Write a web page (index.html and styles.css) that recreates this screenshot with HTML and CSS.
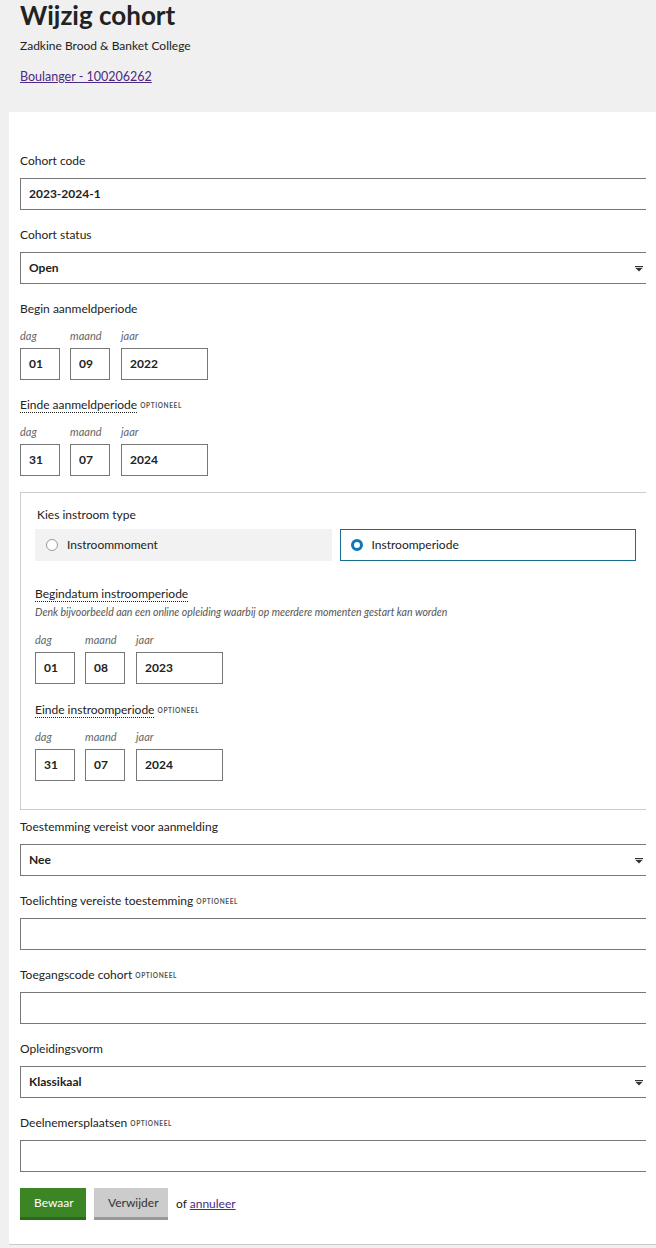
FILE: index.html
```html
<!DOCTYPE html>
<html lang="nl">
<head>
<meta charset="utf-8">
<title>Wijzig cohort</title>
<link rel="stylesheet" href="styles.css">
</head>
<body>
<header class="page-header">
  <h1 class="title">Wijzig cohort</h1>
  <p class="subtitle">Zadkine Brood &amp; Banket College</p>
  <a class="crumb" href="#">Boulanger - 100206262</a>
</header>
<main class="card">
  <form class="form">
    <div class="field">
      <label class="label">Cohort code</label>
      <div class="input"><span class="value">2023-2024-1</span></div>
    </div>
    <div class="field">
      <label class="label">Cohort status</label>
      <div class="input select"><span class="value">Open</span><svg class="caret" width="8" height="6" viewBox="0 0 8 6"><rect x="0" y="0" width="8" height="1.2" fill="#333"/><path d="M0.5 2 L7.5 2 L4 5.5 Z" fill="#333"/></svg></div>
    </div>
    <div class="field">
      <label class="label">Begin aanmeldperiode</label>
      <div class="date">
        <div class="date-part"><span class="sub">dag</span><div class="input small"><span class="value">01</span></div></div>
        <div class="date-part"><span class="sub">maand</span><div class="input small"><span class="value">09</span></div></div>
        <div class="date-part year"><span class="sub">jaar</span><div class="input year-box"><span class="value">2022</span></div></div>
      </div>
    </div>
    <div class="field">
      <label class="label"><span class="dotted">Einde aanmeldperiode</span> <span class="opt">OPTIONEEL</span></label>
      <div class="date">
        <div class="date-part"><span class="sub">dag</span><div class="input small"><span class="value">31</span></div></div>
        <div class="date-part"><span class="sub">maand</span><div class="input small"><span class="value">07</span></div></div>
        <div class="date-part year"><span class="sub">jaar</span><div class="input year-box"><span class="value">2024</span></div></div>
      </div>
    </div>

    <fieldset class="box">
      <div class="box-label">Kies instroom type</div>
      <div class="radios">
        <div class="radio"><span class="dot"></span><span>Instroommoment</span></div>
        <div class="radio checked"><span class="dot"></span><span>Instroomperiode</span></div>
      </div>
      <div class="field inbox first">
        <label class="label"><span class="dotted">Begindatum instroomperiode</span></label>
        <div class="hint">Denk bijvoorbeeld aan een online opleiding waarbij op meerdere momenten gestart kan worden</div>
        <div class="date">
          <div class="date-part"><span class="sub">dag</span><div class="input small"><span class="value">01</span></div></div>
          <div class="date-part"><span class="sub">maand</span><div class="input small"><span class="value">08</span></div></div>
          <div class="date-part year"><span class="sub">jaar</span><div class="input year-box"><span class="value">2023</span></div></div>
        </div>
      </div>
      <div class="field inbox">
        <label class="label"><span class="dotted">Einde instroomperiode</span> <span class="opt">OPTIONEEL</span></label>
        <div class="date">
          <div class="date-part"><span class="sub">dag</span><div class="input small"><span class="value">31</span></div></div>
          <div class="date-part"><span class="sub">maand</span><div class="input small"><span class="value">07</span></div></div>
          <div class="date-part year"><span class="sub">jaar</span><div class="input year-box"><span class="value">2024</span></div></div>
        </div>
      </div>
    </fieldset>

    <div class="field">
      <label class="label">Toestemming vereist voor aanmelding</label>
      <div class="input select"><span class="value">Nee</span><svg class="caret" width="8" height="6" viewBox="0 0 8 6"><rect x="0" y="0" width="8" height="1.2" fill="#333"/><path d="M0.5 2 L7.5 2 L4 5.5 Z" fill="#333"/></svg></div>
    </div>
    <div class="field">
      <label class="label">Toelichting vereiste toestemming <span class="opt">OPTIONEEL</span></label>
      <div class="input"></div>
    </div>
    <div class="field">
      <label class="label">Toegangscode cohort <span class="opt">OPTIONEEL</span></label>
      <div class="input"></div>
    </div>
    <div class="field">
      <label class="label">Opleidingsvorm</label>
      <div class="input select"><span class="value">Klassikaal</span><svg class="caret" width="8" height="6" viewBox="0 0 8 6"><rect x="0" y="0" width="8" height="1.2" fill="#333"/><path d="M0.5 2 L7.5 2 L4 5.5 Z" fill="#333"/></svg></div>
    </div>
    <div class="field">
      <label class="label">Deelnemersplaatsen <span class="opt">OPTIONEEL</span></label>
      <div class="input"></div>
    </div>
    <div class="actions">
      <button type="button" class="btn primary">Bewaar</button>
      <button type="button" class="btn secondary">Verwijder</button>
      <span class="or">of <a href="#">annuleer</a></span>
    </div>
  </form>
</main>
</body>
</html>
```

FILE: styles.css
```css
* { box-sizing: border-box; }
html, body {
  margin: 0;
  padding: 0;
  background: #f0f0f0;
  font-family: Lato, "Liberation Sans", sans-serif;
  color: #222;
  font-size: 12px;
  line-height: 18px;
}
.page-header {
  padding: 0 20px 26px 20px;
}
.title {
  margin: 0;
  font-size: 26px;
  line-height: 30px;
  font-weight: 700;
  color: #222;
}
.subtitle {
  margin: 7px 0 0 0;
  font-size: 12px;
  line-height: 18px;
}
.crumb {
  display: inline-block;
  margin-top: 13px;
  color: #4b2a84;
  text-decoration: underline;
  font-size: 12.5px;
  line-height: 18px;
}
.card {
  margin-left: 9px;
  background: #fff;
  border-bottom: 1px solid #ccc;
  padding: 40px 0 23px 11px;
  height: 1133px;
}
.form {
  width: 626px;
  overflow: hidden;
}
.field {
  margin-bottom: 16px;
}
.label {
  display: block;
  font-size: 12px;
  line-height: 18px;
  margin-bottom: 0;
  color: #222;
}
.dotted {
  border-bottom: 1px dotted #222;
}
.opt {
  font-size: 6.5px;
  line-height: 0;
  font-weight: 700;
  letter-spacing: 0.6px;
  color: #555;
  vertical-align: 1px;
}
.input {
  display: flex;
  align-items: center;
  height: 32px;
  width: calc(100% + 10px);
  border: 1px solid #777;
  background: #fff;
  padding: 0 8px;
  position: relative;
}
.value {
  font-weight: 700;
  font-size: 12px;
  color: #222;
}
.select .caret {
  position: absolute;
  right: 12px;
  top: 13px;
}
.date {
  display: flex;
  gap: 10px;
  margin-top: 9px;
}
.date-part {
  display: flex;
  flex-direction: column;
}
.date-part.year { margin-left: 1px; }
.sub {
  font-style: italic;
  font-size: 11px;
  line-height: 18px;
  color: #666;
  margin-bottom: 3px;
}
.input.small { width: 40px; }
.input.year-box { width: 87px; }
.field > .label + .input { margin-top: 8px; }
.box {
  margin: 0 0 8px 0;
  width: calc(100% + 5px);
  border: 1px solid #ccc;
  padding: 13px 14px 28px 14px;
}
.box-label {
  margin-left: 2px;
  line-height: 18px;
  font-size: 12px;
}
.radios {
  display: grid;
  grid-template-columns: 1fr 1fr;
  gap: 8px;
  margin-top: 5px;
}
.radio {
  display: flex;
  align-items: center;
  height: 32px;
  padding-left: 10px;
  gap: 9px;
  background: #f2f2f2;
  border: 1px solid #f2f2f2;
  font-size: 12px;
}
.radio.checked {
  background: #fff;
  border-color: #1a6d8f;
}
.dot {
  width: 12px;
  height: 12px;
  border-radius: 50%;
  border: 1px solid #999;
  background: #fff;
}
.radio.checked .dot {
  border: 3.5px solid #0e76bb;
}
.inbox.first { margin-top: 24px; }
.inbox { margin-bottom: 17px; }
.inbox:last-child { margin-bottom: 0; }
.hint {
  font-style: italic;
  font-size: 10.5px;
  line-height: 18px;
  color: #555;
}
.inbox .hint + .date { margin-top: 10px; }
.actions {
  display: flex;
  align-items: center;
  gap: 8px;
  margin-top: 16px;
}
.btn {
  font-family: Lato, "Liberation Sans", sans-serif;
  font-size: 12px;
  height: 32px;
  border: none;
  padding: 0 14px;
  cursor: pointer;
}
.btn.primary {
  width: 66px;
  background: #3b8524;
  color: #fff;
  border-bottom: 3px solid #2c6a19;
}
.btn.secondary {
  width: 74px;
  background: #cccccc;
  color: #333;
  border-bottom: 3px solid #999;
}
.or {
  font-size: 12px;
  color: #222;
}
.or a {
  color: #4b2a84;
  text-decoration: underline;
}
```
